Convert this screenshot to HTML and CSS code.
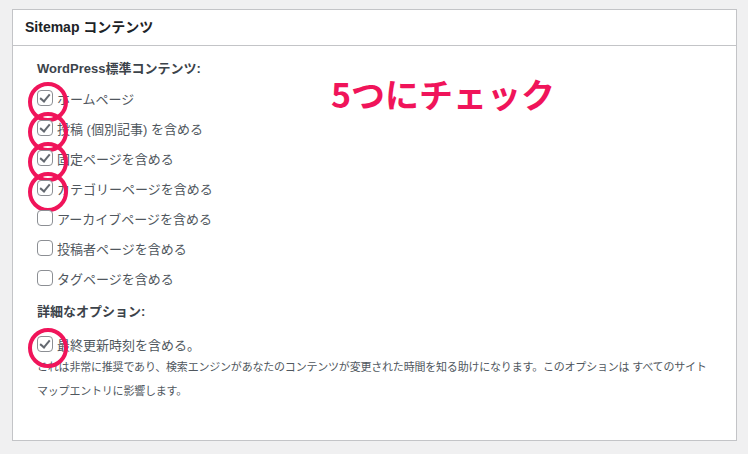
FILE: index.html
```html
<!DOCTYPE html>
<html lang="ja">
<head>
	<meta charset="UTF-8">
	<title>Sitemap コンテンツ</title>
	<link rel="stylesheet" href="styles.css">
</head>
<body>
	<div class="postbox">
		<h2 class="hndle">Sitemap コンテンツ</h2>
		<div class="inside">
			<h4>WordPress標準コンテンツ:</h4>
			<ul class="options">
				<li><label><span class="cb checked"><i class="mark"></i></span>ホームページ</label></li>
				<li><label><span class="cb checked"><i class="mark"></i></span>投稿 (個別記事) を含める</label></li>
				<li><label><span class="cb checked"><i class="mark"></i></span>固定ページを含める</label></li>
				<li><label><span class="cb checked"><i class="mark"></i></span>カテゴリーページを含める</label></li>
				<li><label><span class="cb"></span>アーカイブページを含める</label></li>
				<li><label><span class="cb"></span>投稿者ページを含める</label></li>
				<li><label><span class="cb"></span>タグページを含める</label></li>
			</ul>
			<h4 class="adv">詳細なオプション:</h4>
			<ul class="options last">
				<li><label><span class="cb checked"><i class="mark"></i></span>最終更新時刻を含める。</label></li>
			</ul>
			<p class="desc">これは非常に推奨であり、検索エンジンがあなたのコンテンツが変更された時間を知る助けになります。このオプションは すべてのサイト<br>マップエントリに影響します。</p>
			<div class="note">5つにチェック</div>
		</div>
	</div>
</body>
</html>
```
FILE: styles.css
```css
* {
	margin: 0;
	padding: 0;
	box-sizing: border-box;
}
body {
	background: #f0f0f1;
	padding: 9px 11px 0 12px;
	font-family: "Liberation Sans", "Noto Sans CJK JP", sans-serif;
	font-size: 13px;
	color: #50575e;
}
.postbox {
	width: 725px;
	height: 432px;
	background: #fff;
	border: 1px solid #c3c4c7;
}
.hndle {
	height: 36px;
	line-height: 35px;
	padding-left: 12px;
	font-size: 14px;
	font-weight: bold;
	color: #1d2327;
	border-bottom: 1px solid #c3c4c7;
}
.inside {
	position: relative;
	padding: 13px 24px 0 24px;
}
.inside h4 {
	font-size: 13px;
	line-height: 20px;
	font-weight: bold;
	color: #3c434a;
}
.inside h4.adv {
	margin-top: 9px;
}
.options {
	list-style: none;
	margin-top: 4px;
}
.options.last {
	margin-top: 7px;
}
.options li {
	height: 30px;
	display: flex;
	align-items: center;
}
.options label {
	display: flex;
	align-items: center;
	gap: 4px;
	position: relative;
}
.cb {
	width: 16px;
	height: 16px;
	border: 1px solid #8c8f94;
	border-radius: 4px;
	background: #fff;
	position: relative;
	flex: none;
}
.cb .mark {
	position: absolute;
	left: 4px;
	top: 1px;
	width: 6px;
	height: 10px;
	border-right: 2.5px solid #646970;
	border-bottom: 2.5px solid #646970;
	transform: rotate(40deg);
}
.cb.checked::after {
	content: "";
	position: absolute;
	left: -10px;
	top: -9px;
	width: 32px;
	height: 32px;
	border: 4px solid #f0145a;
	border-radius: 50%;
}
.desc {
	margin-top: -4px;
	font-size: 11px;
	line-height: 24px;
	letter-spacing: -0.2px;
}
.note {
	position: absolute;
	left: 318px;
	top: 31px;
	font-family: "Noto Sans CJK JP", sans-serif;
	font-size: 34px;
	line-height: 1;
	font-weight: bold;
	color: #f0145a;
}
```
